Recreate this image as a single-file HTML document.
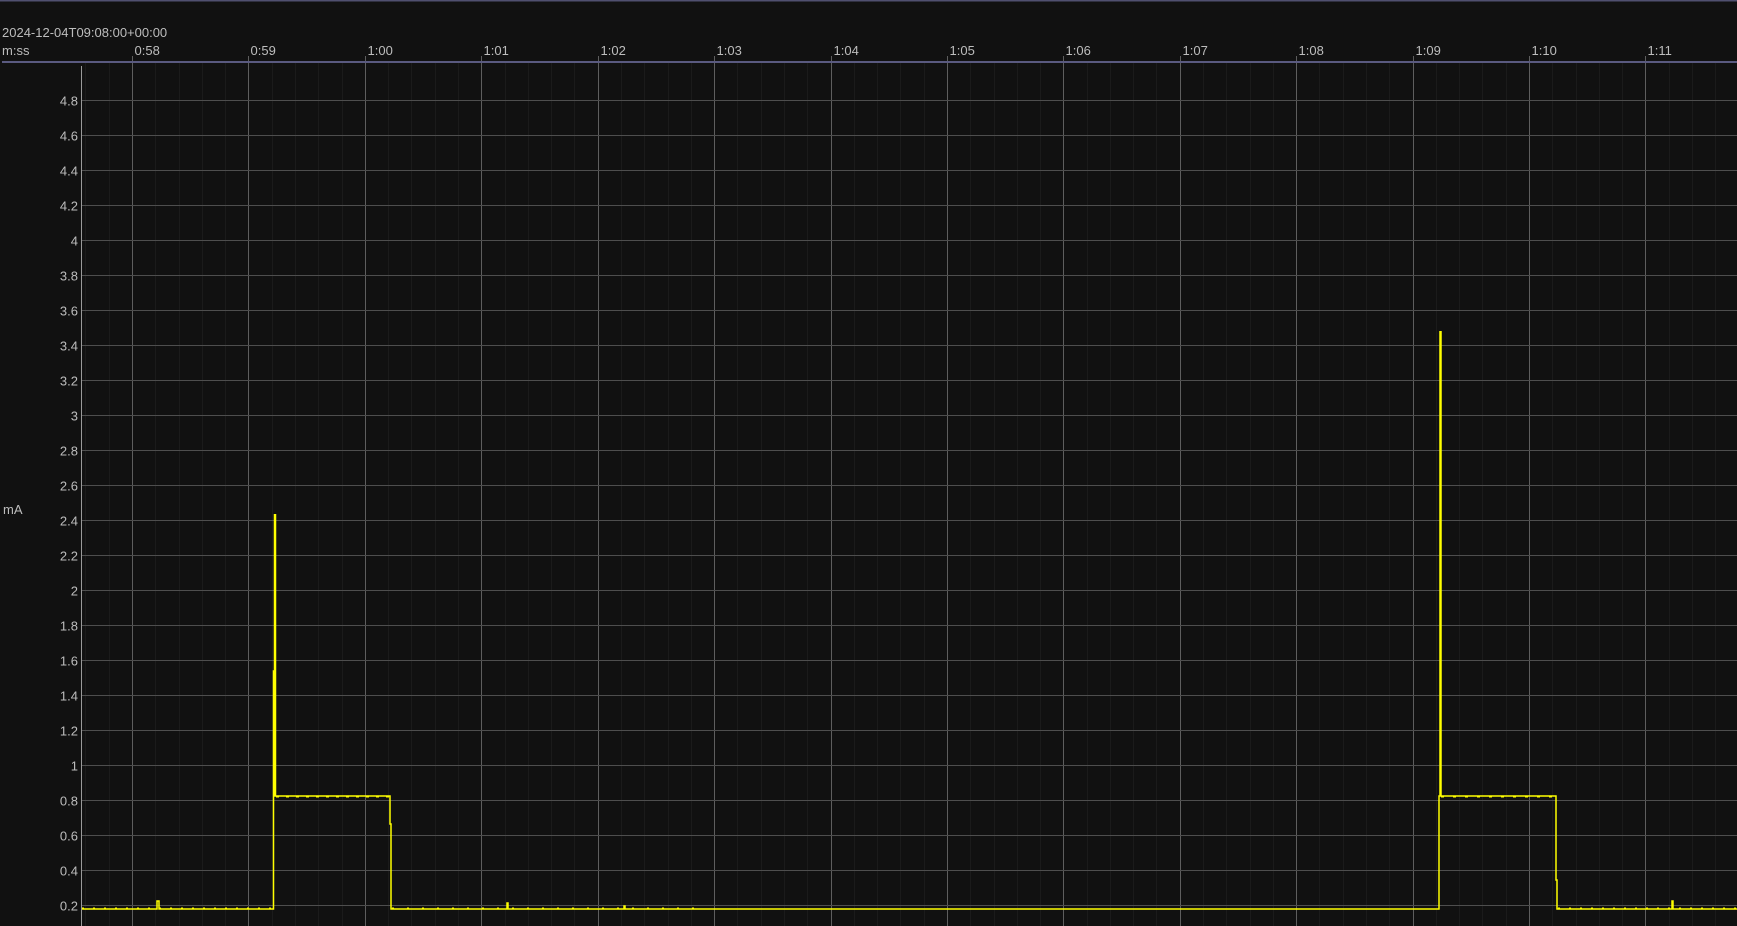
<!DOCTYPE html>
<html><head><meta charset="utf-8"><style>
html,body{margin:0;padding:0;background:#111;width:1737px;height:926px;overflow:hidden}
svg{display:block}
text{font-family:"Liberation Sans",sans-serif;font-size:13px;fill:#bdbdbd}
</style></head><body>
<svg width="1737" height="926" xmlns="http://www.w3.org/2000/svg">
<rect width="1737" height="926" fill="#111"/>
<rect x="0" y="0" width="1737" height="1.5" fill="#505070"/>
<text x="2" y="37">2024-12-04T09:08:00+00:00</text>
<text x="2" y="55">m:ss</text>
<g id="minor" stroke="#1b1b1b" stroke-width="1"></g>
<g id="major" stroke="#5e5e5e" stroke-width="1"></g>
<g id="hz" stroke="#4e4e4e" stroke-width="1"></g>
<g id="xl"></g>
<g id="yl" text-anchor="end"></g>
<rect x="2" y="61" width="1735" height="2" fill="#5a5a80"/>
<line x1="81.5" y1="66" x2="81.5" y2="926" stroke="#9a9a9a"/>
<text x="3" y="514">mA</text>
<g fill="none" stroke="#ffff00" stroke-width="1.5">
<polyline points="82,909 157,909 157,901 159,901 159,909 273.5,909 273.5,671 275,671 275,514 275,796 390,796 390,824 391,824 391,909 507,909 507,903 508,903 508,909 624,909 624,906 625,906 625,909 1439,909 1439,796 1556,796 1556,880 1557,880 1557,909 1672,909 1672,901 1673,901 1673,909 1737,909"/>
<line x1="275" y1="514" x2="275" y2="796" stroke-width="2.5"/>
<line x1="1440.5" y1="331" x2="1440.5" y2="796" stroke-width="2.5"/>
<polyline points="276,797 390,797" stroke-width="1" stroke-dasharray="3 7"/>
<polyline points="1441,797 1556,797" stroke-width="1" stroke-dasharray="3 9"/>
<polyline points="82,908 273,908" stroke-width="1" stroke-dasharray="2 9"/>
<polyline points="392,908 700,908" stroke-width="1" stroke-dasharray="2 13"/>
<polyline points="1558,908 1737,908" stroke-width="1" stroke-dasharray="2 9"/>
</g>
</svg>
<script>
var ns="http://www.w3.org/2000/svg";
function el(p,t,a,txt){var e=document.createElementNS(ns,t);for(var k in a)e.setAttribute(k,a[k]);if(txt)e.textContent=txt;document.getElementById(p).appendChild(e);}
var x0=132,sp=116.42;
var labels=["0:58","0:59","1:00","1:01","1:02","1:03","1:04","1:05","1:06","1:07","1:08","1:09","1:10","1:11"];
for(var i=-1;i<=14;i++){for(var j=1;j<5;j++){var x=Math.round(x0+sp*i+sp*j/5)+0.5;if(x>82&&x<1737)el("minor","line",{x1:x,y1:63,x2:x,y2:926});}}
for(var i=0;i<14;i++){var x=Math.round(x0+sp*i)+0.5;el("major","line",{x1:x,y1:56,x2:x,y2:926});el("xl","text",{x:x+2,y:55},labels[i]);}
for(var k=1;k<=24;k++){var v=k*0.2;var y=Math.round(905-(k-1)*35)+0.5;el("hz","line",{x1:82,y1:y,x2:1737,y2:y});var s=(Math.round(v*10)/10).toString();el("yl","text",{x:78,y:y+5},s);}
</script>
</body></html>
